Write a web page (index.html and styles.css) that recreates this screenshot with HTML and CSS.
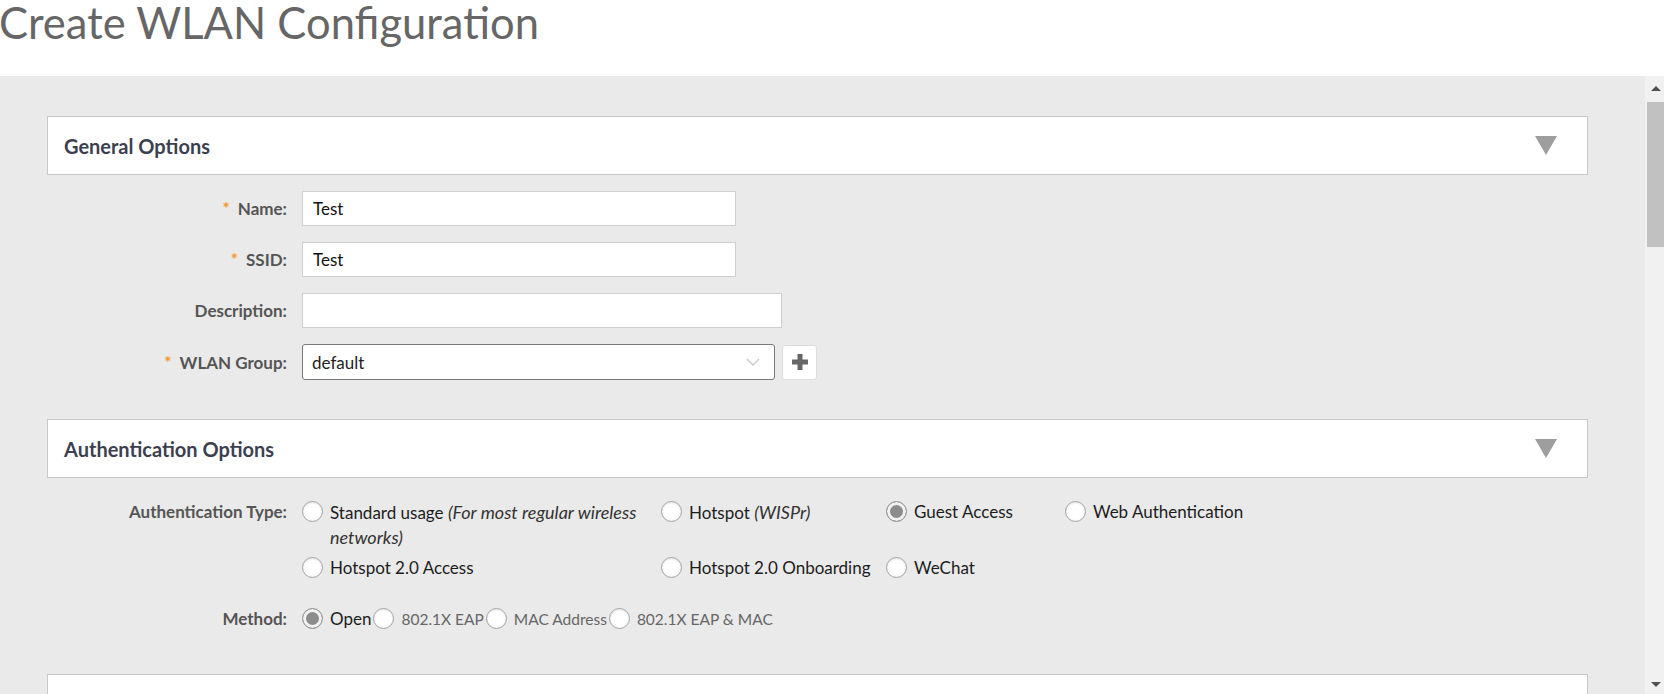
FILE: index.html
```html
<!DOCTYPE html>
<html lang="en">
<head>
    <meta charset="UTF-8">
    <meta name="viewport" content="width=device-width, initial-scale=1.0">
    <title>Create WLAN Configuration</title>
    <link rel="stylesheet" href="styles.css">
</head>
<body>
    <header class="page-head">
        <h1>Create WLAN Configuration</h1>
    </header>

    <div class="workspace">
        <div class="content">
            <section class="panel">
                <h2>General Options</h2>
                <span class="caret"></span>
            </section>
            <div class="form-block general">
                <div class="row">
                    <label class="req" for="wlanName">Name:</label>
                    <input type="text" id="wlanName" class="field name" value="Test">
                </div>
                <div class="row">
                    <label class="req" for="wlanSsid">SSID:</label>
                    <input type="text" id="wlanSsid" class="field name" value="Test">
                </div>
                <div class="row">
                    <label for="wlanDesc">Description:</label>
                    <input type="text" id="wlanDesc" class="field desc">
                </div>
                <div class="row">
                    <label class="req" for="wlanGroup">WLAN Group:</label>
                    <div class="select">
                        <span>default</span>
                        <svg class="chevron" width="14" height="8" viewBox="0 0 14 8"><path d="M1 1l6 6 6-6" fill="none" stroke="#c8c8c8" stroke-width="1.3"/></svg>
                    </div>
                    <button class="add-btn" type="button">
                        <svg width="18" height="18" viewBox="0 0 18 18"><path d="M9 1v16M1 9h16" stroke="#666" stroke-width="5"/></svg>
                    </button>
                </div>
            </div>

            <section class="panel">
                <h2>Authentication Options</h2>
                <span class="caret"></span>
            </section>
            <div class="form-block auth">
                <div class="row top">
                    <label>Authentication Type:</label>
                    <div class="choice-grid">
                        <label class="opt"><input type="radio" name="authType"><span>Standard usage <em>(For most regular wireless</em> <em>networks)</em></span></label>
                        <label class="opt"><input type="radio" name="authType"><span>Hotspot <em>(WISPr)</em></span></label>
                        <label class="opt"><input type="radio" name="authType" checked><span>Guest Access</span></label>
                        <label class="opt"><input type="radio" name="authType"><span>Web Authentication</span></label>
                        <label class="opt"><input type="radio" name="authType"><span>Hotspot 2.0 Access</span></label>
                        <label class="opt"><input type="radio" name="authType"><span>Hotspot 2.0 Onboarding</span></label>
                        <label class="opt"><input type="radio" name="authType"><span>WeChat</span></label>
                    </div>
                </div>
                <div class="row method">
                    <label>Method:</label>
                    <div class="inline-opts">
                        <label class="opt"><input type="radio" name="method" checked><span>Open</span></label>
                        <label class="opt off"><input type="radio" name="method"><span>802.1X EAP</span></label>
                        <label class="opt off"><input type="radio" name="method"><span>MAC Address</span></label>
                        <label class="opt off"><input type="radio" name="method"><span>802.1X EAP &amp; MAC</span></label>
                    </div>
                </div>
            </div>

            <section class="panel">
                <h2>Encryption Options</h2>
                <span class="caret"></span>
            </section>
        </div>

        <div class="scrollbar">
            <span class="arrow up"></span>
            <div class="thumb"></div>
            <div class="track"></div>
            <span class="arrow down"></span>
        </div>
    </div>
</body>
</html>
```

FILE: styles.css
```css
body {
    margin: 0;
    font-family: Lato, "Open Sans", sans-serif;
    color: #222;
    background: #fff;
    height: 694px;
    overflow: hidden;
    display: flex;
    flex-direction: column;
}
.page-head {
    height: 76px;
    flex: none;
}
.page-head h1 {
    margin: 0 0 0 -1px;
    font-size: 43.5px;
    font-weight: 400;
    line-height: 44px;
    color: #666;
}
.workspace {
    flex: 1;
    display: flex;
    min-height: 0;
}
.content {
    flex: 1;
    background: #eaeaea;
    padding: 40px 57px 0 47px;
    overflow: hidden;
}
.panel {
    height: 59px;
    box-sizing: border-box;
    background: #fff;
    border: 1px solid #c8c8c8;
    display: flex;
    align-items: center;
    justify-content: space-between;
    padding: 0 30px 0 16px;
}
.panel h2 {
    margin: 0;
    font-size: 20px;
    font-weight: 700;
    color: #3c3f50;
}
.caret {
    width: 0;
    height: 0;
    border-left: 11px solid transparent;
    border-right: 11px solid transparent;
    border-top: 19px solid #9e9e9e;
}
.form-block.general {
    padding: 16px 0 39px;
}
.form-block.auth {
    padding: 22px 0 43px;
}
.row {
    display: flex;
    align-items: center;
    margin-bottom: 16px;
}
.row:last-child {
    margin-bottom: 0;
}
.row > label {
    width: 240px;
    margin-right: 15px;
    flex: none;
    text-align: right;
    font-size: 17px;
    font-weight: 700;
    color: #555;
}
.row > label.req::before {
    content: "*";
    color: #f39a2b;
    margin-right: 8px;
}
.row.top {
    align-items: flex-start;
    margin-bottom: 27px;
}
.row.top > label,
.row.method > label {
    line-height: 24px;
}
.field {
    height: 35px;
    box-sizing: border-box;
    border: 1px solid #cfcfcf;
    background: #fff;
    padding: 0 10px;
    font: inherit;
    font-size: 17px;
    color: #111;
}
.field.name {
    width: 434px;
}
.field.desc {
    width: 480px;
}
.select {
    width: 473px;
    height: 36px;
    box-sizing: border-box;
    border: 1px solid #7a7a7a;
    border-radius: 3px;
    background: #fff;
    display: flex;
    align-items: center;
    justify-content: space-between;
    padding: 0 14px 0 9px;
    font-size: 17px;
    color: #222;
}
.add-btn {
    width: 35px;
    height: 35px;
    margin-left: 7px;
    border: 1px solid #dedede;
    border-radius: 3px;
    background: #fff;
    padding: 0;
    display: flex;
    align-items: center;
    justify-content: center;
}
.choice-grid {
    display: grid;
    grid-template-columns: 359px 225px 179px auto;
    row-gap: 6px;
    align-items: start;
}
.opt {
    display: flex;
    align-items: flex-start;
    font-size: 17px;
    line-height: 24px;
    color: #1c1c1c;
}
.opt em {
    font-size: 18px;
    color: #333;
}
.opt input {
    appearance: none;
    -webkit-appearance: none;
    flex: none;
    width: 21px;
    height: 21px;
    margin: 1px 7px 0 0;
    border: 1px solid #a5a5a5;
    border-radius: 50%;
    background: radial-gradient(circle at 50% 40%, #fff 55%, #eeeeee);
    box-shadow: inset 0 1px 2px rgba(0, 0, 0, 0.12);
}
.opt input:checked {
    border-color: #9a9a9a;
    background: #8c8c8c;
    box-shadow: inset 0 0 0 3px #f2f2f2;
}
.inline-opts {
    display: flex;
}
.inline-opts .opt span {
    margin-right: 2px;
}
.inline-opts .opt.off {
    font-size: 15.5px;
    color: #666;
}
.scrollbar {
    width: 19px;
    flex: none;
    background: #f1f1f1;
    display: flex;
    flex-direction: column;
    align-items: flex-end;
}
.arrow {
    width: 0;
    height: 0;
    border-left: 5px solid transparent;
    border-right: 5px solid transparent;
    margin: 10px 3px 0 0;
}
.arrow.up {
    border-bottom: 5px solid #505050;
}
.arrow.down {
    border-top: 5px solid #505050;
    margin: 0 3px 7px 0;
}
.thumb {
    width: 17px;
    height: 145px;
    margin-top: 11px;
    background: #c1c1c1;
}
.track {
    flex: 1;
}
```
